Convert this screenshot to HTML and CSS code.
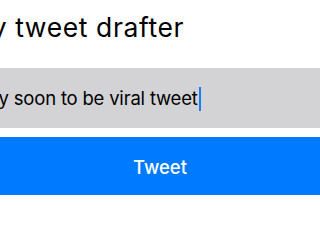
FILE: index.html
```html
<!DOCTYPE html>
<html>
<head>
<meta charset="utf-8">
<link rel="stylesheet" href="styles.css">
</head>
<body>
<div class="screen">
  <h1 class="title"><span class="shift-title">My tweet drafter</span></h1>
  <div class="field"><span class="shift-field">My soon to be viral tweet</span><span class="caret"></span></div>
  <div class="button">Tweet</div>
</div>
</body>
</html>
```
FILE: styles.css
```css
html, body {
  margin: 0;
  padding: 0;
  background: #ffffff;
  overflow: hidden;
}
.screen {
  width: 320px;
  height: 214px;
  overflow: hidden;
  font-family: Inter, "Liberation Sans", Arial, sans-serif;
  color: #000;
  display: flex;
  flex-direction: column;
}
.title {
  margin: 0;
  box-sizing: border-box;
  height: 68px;
  padding-top: 11px;
  font-size: 26.5px;
  font-weight: normal;
  letter-spacing: 0.6px;
  line-height: 32px;
  white-space: nowrap;
}
.shift-title {
  display: inline-block;
  margin-left: -33px;
}
.field {
  box-sizing: border-box;
  height: 60px;
  padding-top: 1px;
  background: #d3d3d6;
  font-size: 18.5px;
  letter-spacing: -0.2px;
  line-height: 59px;
  white-space: nowrap;
}
.shift-field {
  display: inline-block;
  margin-left: -18px;
}
.caret {
  display: inline-block;
  width: 2px;
  height: 24px;
  margin-left: 1px;
  vertical-align: -6px;
  background: #1a7cf5;
}
.button {
  box-sizing: border-box;
  margin-top: 9px;
  height: 58px;
  padding-top: 3px;
  background: #007aff;
  color: #ffffff;
  text-align: center;
  font-size: 18.5px;
  font-weight: 500;
  line-height: 55px;
}
```
